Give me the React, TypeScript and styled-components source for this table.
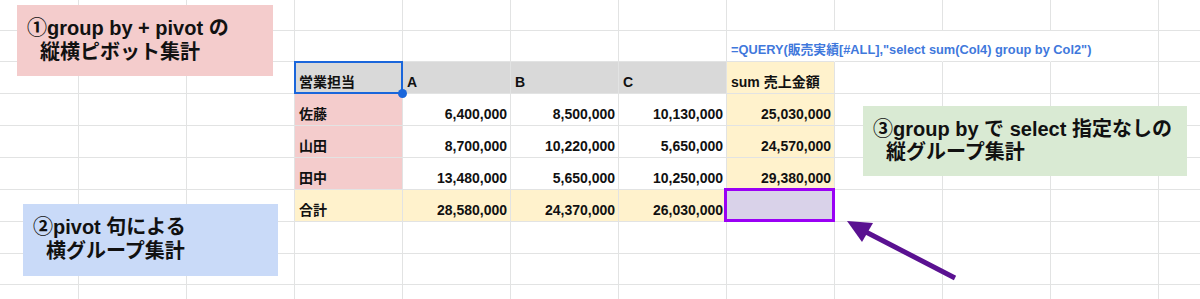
import React from 'react';
import styled, { createGlobalStyle } from 'styled-components';

const GlobalStyle = createGlobalStyle`
  html, body { margin: 0; padding: 0; background: #ffffff; }
  body { font-family: "Liberation Sans", "Noto Sans CJK JP", sans-serif; }
`;

const COLS = [79, ...Array(11).fill(108)];
const ROWS = [31, 31, 32, 32, 32, 32, 32, 32, 31, 40];
const GRID = '#e2e3e3';

const FILLS = {
  grey: '#d9d9d9',
  pink: '#f4cccc',
  yellow: '#fff2cc',
  purple: '#d9d2e9',
} as const;

type Fill = keyof typeof FILLS;

type Spec = {
  text?: string;
  fill?: Fill;
  align?: 'left' | 'right';
  frame?: 'select' | 'purple';
  formula?: boolean;
};

const Page = styled.div`
  position: relative;
  width: 1200px;
  height: 299px;
  overflow: hidden;
  background: #ffffff;
`;

const Sheet = styled.div`
  display: grid;
  grid-template-columns: ${COLS.map((c) => `${c}px`).join(' ')};
  grid-template-rows: ${ROWS.map((r) => `${r}px`).join(' ')};
`;

const Cell = styled.div<{ $fill?: string; $right?: boolean; $noRight?: boolean; $raised?: boolean }>`
  box-sizing: border-box;
  position: ${(p) => (p.$raised ? 'relative' : 'static')};
  display: flex;
  align-items: flex-end;
  justify-content: ${(p) => (p.$right ? 'flex-end' : 'flex-start')};
  padding: 0 3px 2px 4px;
  border-right: 1px solid ${(p) => (p.$noRight ? 'transparent' : GRID)};
  border-bottom: 1px solid ${GRID};
  background: ${(p) => p.$fill ?? 'transparent'};
  font-size: 14px;
  font-weight: 700;
  line-height: 17px;
  color: #111111;
  white-space: nowrap;
`;

const Formula = styled.span`
  font-size: 12.8px;
  line-height: 16px;
  font-weight: 700;
  color: #3f78dc;
  margin-bottom: 1px;
`;

const SelectFrame = styled.div`
  position: absolute;
  inset: -1px;
  border: 2px solid #1a66db;
  pointer-events: none;
`;

const FillHandle = styled.div`
  position: absolute;
  right: -5px;
  bottom: -5px;
  width: 9px;
  height: 9px;
  border-radius: 50%;
  background: #1a66db;
`;

const PurpleFrame = styled.div`
  position: absolute;
  top: -2px;
  left: -3px;
  right: -1px;
  bottom: -1px;
  border: 3px solid #9a00f5;
  pointer-events: none;
`;

const Note = styled.div<{ $bg: string; $x: number; $y: number; $w: number; $h: number; $pad: number; $lh: number }>`
  position: absolute;
  left: ${(p) => p.$x}px;
  top: ${(p) => p.$y}px;
  width: ${(p) => p.$w}px;
  height: ${(p) => p.$h}px;
  box-sizing: border-box;
  padding: ${(p) => p.$pad}px 10px 0 10px;
  background: ${(p) => p.$bg};
  font-size: 20px;
  font-weight: 700;
  line-height: ${(p) => p.$lh}px;
  color: #111111;
`;

const NoteLine = styled.div<{ $indent?: boolean }>`
  white-space: nowrap;
  padding-left: ${(p) => (p.$indent ? '13px' : '0')};
`;

const Arrow = styled.svg`
  position: absolute;
  left: 840px;
  top: 215px;
  width: 125px;
  height: 70px;
  overflow: visible;
`;

const table: Record<string, Spec> = {};
const put = (r: number, c: number, s: Spec) => {
  table[`${r}-${c}`] = s;
};

put(1, 7, { text: '=QUERY(販売実績[#ALL],"select sum(Col4) group by Col2")', formula: true });

['営業担当', 'A', 'B', 'C'].forEach((t, i) =>
  put(2, 3 + i, { text: t, fill: 'grey', frame: i === 0 ? 'select' : undefined })
);
put(2, 7, { text: 'sum 売上金額', fill: 'yellow' });

const data: [string, string, string, string, string][] = [
  ['佐藤', '6,400,000', '8,500,000', '10,130,000', '25,030,000'],
  ['山田', '8,700,000', '10,220,000', '5,650,000', '24,570,000'],
  ['田中', '13,480,000', '5,650,000', '10,250,000', '29,380,000'],
];
data.forEach((row, ri) => {
  put(3 + ri, 3, { text: row[0], fill: 'pink' });
  [1, 2, 3].forEach((ci) => put(3 + ri, 3 + ci, { text: row[ci], align: 'right' }));
  put(3 + ri, 7, { text: row[4], fill: 'yellow', align: 'right' });
});

put(6, 3, { text: '合計', fill: 'yellow' });
['28,580,000', '24,370,000', '26,030,000'].forEach((t, i) =>
  put(6, 4 + i, { text: t, fill: 'yellow', align: 'right' })
);
put(6, 7, { fill: 'purple', frame: 'purple' });

// cells whose right gridline is covered by overflowing formula text
const hiddenRight = new Set(['1-7', '1-8', '1-9']);

const notes = [
  { bg: '#f4cccc', x: 17, y: 5, w: 256, h: 71, pad: 11, lh: 24, lines: ['①group by + pivot の', '縦横ピボット集計'] },
  { bg: '#c9daf8', x: 23, y: 204, w: 255, h: 72, pad: 11, lh: 24, lines: ['②pivot 句による', '横グループ集計'] },
  { bg: '#d9ead3', x: 863, y: 106, w: 324, h: 70, pad: 12, lh: 23, lines: ['③group by で select 指定なしの', '縦グループ集計'] },
];

export default function App() {
  return (
    <Page>
      <GlobalStyle />
      <Sheet>
        {ROWS.map((_, r) =>
          COLS.map((__, c) => {
            const key = `${r}-${c}`;
            const s = table[key];
            return (
              <Cell
                key={key}
                $fill={s?.fill ? FILLS[s.fill] : undefined}
                $right={s?.align === 'right'}
                $noRight={hiddenRight.has(key)}
                $raised={!!s?.frame}
              >
                {s?.formula ? <Formula>{s.text}</Formula> : s?.text}
                {s?.frame === 'select' && (
                  <>
                    <SelectFrame />
                    <FillHandle />
                  </>
                )}
                {s?.frame === 'purple' && <PurpleFrame />}
              </Cell>
            );
          })
        )}
      </Sheet>
      {notes.map((n) => (
        <Note key={n.lines[0]} $bg={n.bg} $x={n.x} $y={n.y} $w={n.w} $h={n.h} $pad={n.pad} $lh={n.lh}>
          <NoteLine>{n.lines[0]}</NoteLine>
          <NoteLine $indent>{n.lines[1]}</NoteLine>
        </Note>
      ))}
      <Arrow viewBox="0 0 125 70">
        <line x1="115" y1="63" x2="25" y2="16.5" stroke="#5a1191" strokeWidth="5" />
        <polygon points="7,6 33,8 22,27" fill="#5a1191" />
      </Arrow>
    </Page>
  );
}
